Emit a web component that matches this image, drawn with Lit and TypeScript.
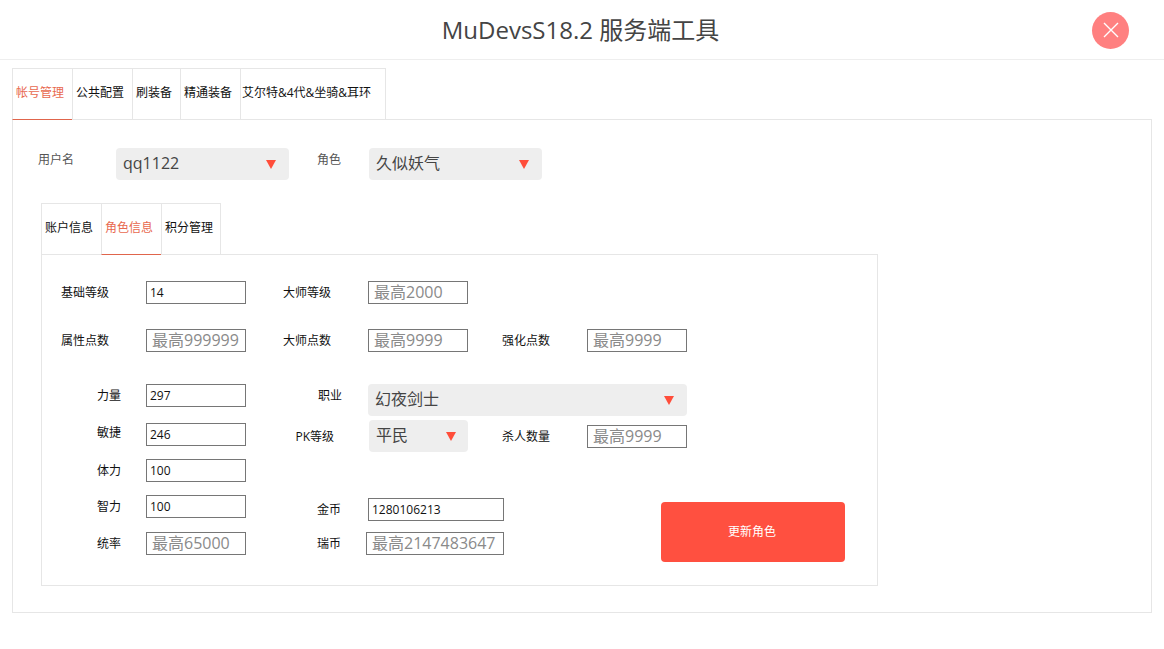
import { LitElement, html, css } from "lit";
import { customElement } from "lit/decorators.js";

const arrow = html`<svg class="arrow" width="10" height="9" viewBox="0 0 10 9"><polygon points="0,0 10,0 5,9" fill="#ff4d3a"/></svg>`;

@customElement("app-root")
export class AppRoot extends LitElement {
  static styles = css`
    :host { display: block; font-family: "Open Sans", "Noto Sans CJK SC", sans-serif; font-size: 12px; color: #111; background: #fff; }
    * { box-sizing: border-box; }
    .header { height: 60px; border-bottom: 1px solid #eee; display: grid; grid-template-columns: 1fr auto 1fr; align-items: center; padding-right: 3px; }
    .title { grid-column: 2; font-size: 24px; line-height: 60px; color: #444; padding-bottom: 0; }
    .close { grid-column: 3; justify-self: end; width: 37px; height: 37px; margin-right: 32px; border-radius: 50%; background: #ff8080; display: flex; align-items: center; justify-content: center; }
    .main { padding: 8px 12px 0; }
    .tabs { display: flex; align-items: stretch; height: 52px; }
    .tab { border: 1px solid #e6e6e6; border-right: 0; border-bottom: 1px solid #e6e6e6; padding: 0 0 3px 3px; display: flex; align-items: center; white-space: nowrap; line-height: 16px; }
    .tab:last-child { border-right: 1px solid #e6e6e6; }
    .tab.on { color: #e8694f; border-bottom-color: #e0654c; }
    .w60 { width: 60px; }
    .w48 { width: 48px; }
    .wlast { width: 146px; padding-left: 1px; }
    .panel { height: 494px; margin-top: -1px; border: 1px solid #e6e6e6; padding: 28px 0 0 25px; }
    .user { display: flex; align-items: flex-start; }
    .lab { flex: none; line-height: 23px; white-space: nowrap; }
    .user .lab { color: #555; line-height: 24px; }
    .lu { width: 78px; }
    .lr { width: 52px; margin-left: 28px; }
    .sel { flex: none; height: 32px; border-radius: 4px; background: #eee; color: #444; font-size: 16px; line-height: 31px; padding: 0 13px 0 7px; display: flex; justify-content: space-between; }
    .arrow { flex: none; margin-top: 12px; }
    .s173 { width: 173px; }
    .s319 { width: 319px; }
    .s99 { width: 99px; padding-right: 12px; margin-left: 1px; }
    .inner { margin: 23px 0 0 3px; }
    .box { width: 837px; height: 332px; margin-top: -1px; border: 1px solid #e6e6e6; padding: 26px 0 0 0; }
    .row { display: flex; height: 23px; margin-bottom: 25px; }
    .la { width: 104px; padding-left: 19px; }
    .lb { width: 85px; margin-left: 37px; }
    .lc { width: 85px; margin-left: 34px; }
    input { flex: none; display: block; width: 100px; height: 23px; border: 1px solid #767676; border-radius: 0; outline: 0; margin: 0; background: #fff; font: inherit; font-size: 12px; color: #111; padding: 0 0 1px 3px; }
    input::placeholder { color: #8a8a8a; opacity: 1; font-size: 16px; }
    input.ph { padding-left: 5px; font-size: 16px; }
    .w136 { width: 136px; }
    .w138 { width: 138px; }
    .lower { display: flex; margin-top: 32px; }
    .left { flex: none; width: 204px; display: grid; grid-template-rows: 39px 36px 36px 37px 23px; }
    .field { display: flex; }
    .ln { width: 104px; padding-left: 55px; }
    .up { line-height: 19px; }
    .right { flex: none; }
    .r1 { display: flex; height: 32px; margin-bottom: 4px; }
    .r2 { display: flex; align-items: center; height: 32px; }
    .m { width: 122px; text-align: right; }
    .p26 { padding-right: 26px; }
    .p34 { padding-right: 34px; }
    .p27 { padding-right: 27px; }
    .p25 { width: 120px; padding-right: 25px; }
    .r1 .lab { line-height: 24px; }
    .lk { width: 85px; margin-left: 34px; }
    .bottom { display: flex; margin-top: 46px; }
    .stack { display: grid; grid-template-rows: 23px 23px; row-gap: 11px; }
    .btn { flex: none; width: 184px; height: 60px; margin: 4px 0 0 157px; background: #ff5040; border-radius: 4px; color: #fff; font-size: 12px; line-height: 60px; text-align: center; padding-right: 2px; }
  `;

  private field(label: string, value: string, ph: string) {
    return html`<div class="field"><span class="lab ln ${label === "敏捷" ? "up" : ""}">${label}</span>${this.input(value, ph)}</div>`;
  }

  private input(value: string, ph: string, cls = "") {
    return html`<input class="${ph ? "ph" : ""} ${cls}" .value=${value} placeholder=${ph} />`;
  }

  render() {
    return html`
      <div class="header">
        <div class="title">MuDevsS18.2 服务端工具</div>
        <div class="close">
          <svg width="16" height="16" viewBox="0 0 16 16"><path d="M1 1 L15 15 M15 1 L1 15" stroke="#fff" stroke-width="1.4" fill="none"/></svg>
        </div>
      </div>
      <div class="main">
        <div class="tabs">
          <div class="tab on w60">帐号管理</div>
          <div class="tab w60">公共配置</div>
          <div class="tab w48">刷装备</div>
          <div class="tab w60">精通装备</div>
          <div class="tab wlast">艾尔特&amp;4代&amp;坐骑&amp;耳环</div>
        </div>
        <div class="panel">
          <div class="user">
            <span class="lab lu">用户名</span>
            <div class="sel s173"><span>qq1122</span>${arrow}</div>
            <span class="lab lr">角色</span>
            <div class="sel s173"><span>久似妖气</span>${arrow}</div>
          </div>
          <div class="inner">
            <div class="tabs">
              <div class="tab w60">账户信息</div>
              <div class="tab on w60">角色信息</div>
              <div class="tab w60">积分管理</div>
            </div>
            <div class="box">
              <div class="row">
                <span class="lab la">基础等级</span>${this.input("14", "")}
                <span class="lab lb">大师等级</span>${this.input("", "最高2000")}
              </div>
              <div class="row">
                <span class="lab la">属性点数</span>${this.input("", "最高999999")}
                <span class="lab lb">大师点数</span>${this.input("", "最高9999")}
                <span class="lab lc">强化点数</span>${this.input("", "最高9999")}
              </div>
              <div class="lower">
                <div class="left">
                  ${this.field("力量", "297", "")}
                  ${this.field("敏捷", "246", "")}
                  ${this.field("体力", "100", "")}
                  ${this.field("智力", "100", "")}
                  ${this.field("统率", "", "最高65000")}
                </div>
                <div class="right">
                  <div class="r1">
                    <span class="lab m p26">职业</span>
                    <div class="sel s319"><span>幻夜剑士</span>${arrow}</div>
                  </div>
                  <div class="r2">
                    <span class="lab m p34">PK等级</span>
                    <div class="sel s99"><span>平民</span>${arrow}</div>
                    <span class="lab lk">杀人数量</span>${this.input("", "最高9999")}
                  </div>
                  <div class="bottom">
                    <div class="stack">
                      <div class="field"><span class="lab m p27">金币</span>${this.input("1280106213", "", "w136")}</div>
                      <div class="field"><span class="lab m p25">瑞币</span>${this.input("", "最高2147483647", "w138")}</div>
                    </div>
                    <div class="btn">更新角色</div>
                  </div>
                </div>
              </div>
            </div>
          </div>
        </div>
      </div>
    `;
  }
}
